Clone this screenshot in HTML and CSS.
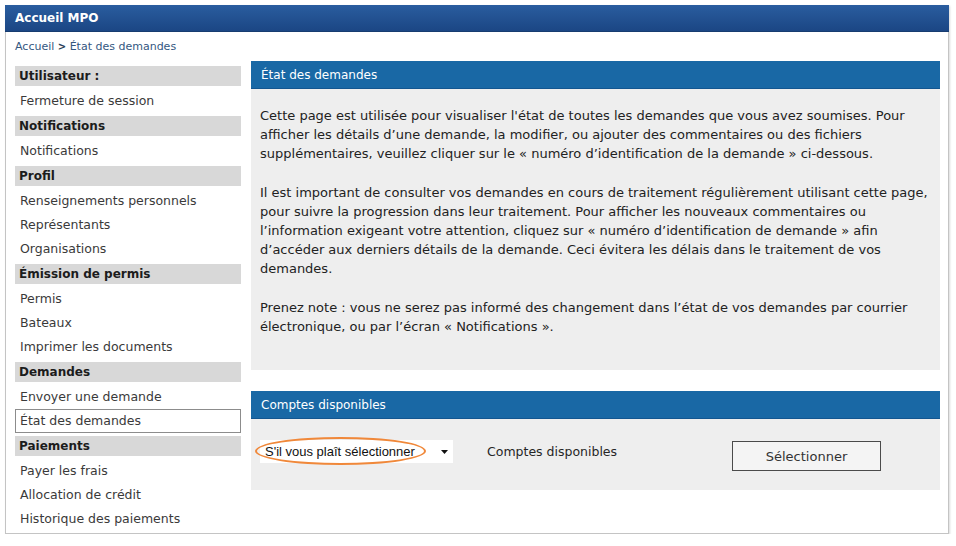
FILE: index.html
```html
<!DOCTYPE html>
<html lang="fr">
<head>
    <meta charset="UTF-8">
    <meta name="viewport" content="width=device-width, initial-scale=1.0">
    <title>État des demandes - Accueil MPO</title>
    <link rel="stylesheet" href="styles.css">
</head>
<body>
    <div class="frame">
        <!-- Top bar -->
        <header class="topbar">Accueil MPO</header>

        <!-- Breadcrumb -->
        <div class="crumbs">
            <a href="#">Accueil</a> <b class="crumb-sep">&gt;</b> <a href="#">État des demandes</a>
        </div>

        <div class="layout">
            <!-- Side menu -->
            <nav class="sidebar">
                <div class="menu-group">
                    <h3 class="menu-title">Utilisateur :</h3>
                    <ul class="menu-list">
                        <li><a href="#">Fermeture de session</a></li>
                    </ul>
                </div>
                <div class="menu-group">
                    <h3 class="menu-title">Notifications</h3>
                    <ul class="menu-list">
                        <li><a href="#">Notifications</a></li>
                    </ul>
                </div>
                <div class="menu-group">
                    <h3 class="menu-title">Profil</h3>
                    <ul class="menu-list">
                        <li><a href="#">Renseignements personnels</a></li>
                        <li><a href="#">Représentants</a></li>
                        <li><a href="#">Organisations</a></li>
                    </ul>
                </div>
                <div class="menu-group">
                    <h3 class="menu-title">Émission de permis</h3>
                    <ul class="menu-list">
                        <li><a href="#">Permis</a></li>
                        <li><a href="#">Bateaux</a></li>
                        <li><a href="#">Imprimer les documents</a></li>
                    </ul>
                </div>
                <div class="menu-group">
                    <h3 class="menu-title">Demandes</h3>
                    <ul class="menu-list">
                        <li><a href="#">Envoyer une demande</a></li>
                        <li class="active"><a href="#">État des demandes</a></li>
                    </ul>
                </div>
                <div class="menu-group">
                    <h3 class="menu-title">Paiements</h3>
                    <ul class="menu-list">
                        <li><a href="#">Payer les frais</a></li>
                        <li><a href="#">Allocation de crédit</a></li>
                        <li><a href="#">Historique des paiements</a></li>
                    </ul>
                </div>
            </nav>

            <!-- Main content -->
            <main class="content">
                <section class="panel">
                    <h2 class="panel-title">État des demandes</h2>
                    <div class="panel-body info-body">
                        <p>Cette page est utilisée pour visualiser l'état de toutes les demandes que vous avez soumises. Pour<br>
                        afficher les détails d’une demande, la modifier, ou ajouter des commentaires ou des fichiers<br>
                        supplémentaires, veuillez cliquer sur le « numéro d’identification de la demande » ci-dessous.</p>
                        <p>Il est important de consulter vos demandes en cours de traitement régulièrement utilisant cette page,<br>
                        pour suivre la progression dans leur traitement. Pour afficher les nouveaux commentaires ou<br>
                        l’information exigeant votre attention, cliquez sur « numéro d’identification de demande » afin<br>
                        d’accéder aux derniers détails de la demande. Ceci évitera les délais dans le traitement de vos<br>
                        demandes.</p>
                        <p>Prenez note : vous ne serez pas informé des changement dans l’état de vos demandes par courrier<br>
                        électronique, ou par l’écran « Notifications ».</p>
                    </div>
                </section>

                <section class="panel accounts">
                    <h2 class="panel-title">Comptes disponibles</h2>
                    <div class="panel-body accounts-body">
                        <div class="select-wrap">
                            <select class="account-select">
                                <option>S'il vous plaît sélectionner</option>
                            </select>
                            <svg class="caret" width="7" height="4" viewBox="0 0 7 4"><path d="M0 0h7L3.5 4z" fill="#111"/></svg>
                            <span class="highlight"></span>
                        </div>
                        <span class="accounts-label">Comptes disponibles</span>
                        <button type="button" class="select-btn">Sélectionner</button>
                    </div>
                </section>
            </main>
        </div>
    </div>
</body>
</html>
```

FILE: styles.css
```css
/* Base */
body {
    margin: 0;
    background-color: #fff;
    font-family: 'DejaVu Sans', Verdana, sans-serif;
    font-size: 12px;
    color: #262626;
}

a {
    color: inherit;
    text-decoration: none;
}

/* Outer frame */
.frame {
    box-sizing: border-box;
    width: 944px;
    height: 529px;
    margin: 5px 0 0 5px;
    border: 1px solid #c4c4c4;
    box-shadow: 1px 1px 2px rgba(0,0,0,0.15);
}

/* Top bar */
.topbar {
    height: 26px;
    line-height: 26px;
    margin: -1px -1px 0;
    padding-left: 10px;
    background: linear-gradient(#2a5d9f, #1b4684);
    border-bottom: 1px solid #173c70;
    color: #fff;
    font-weight: bold;
    font-size: 12px;
}

/* Breadcrumb */
.crumbs {
    height: 29px;
    line-height: 30px;
    padding-left: 9px;
    font-size: 11px;
    color: #34577f;
}

.crumb-sep {
    color: #2b3f5a;
    font-size: 10px;
}

/* Layout */
.layout {
    display: flex;
    gap: 10px;
    padding: 0 8px 0 9px;
}

/* Sidebar */
.sidebar {
    width: 226px;
    margin-top: 5px;
}

.menu-title {
    margin: 0;
    height: 20px;
    line-height: 21px;
    padding-left: 4px;
    background-color: #d8d8d8;
    color: #1c1c1c;
    font-size: 12px;
    font-weight: bold;
}

.menu-list {
    list-style: none;
    margin: 0;
    padding: 3px 0;
}

.menu-list li {
    height: 24px;
    line-height: 24px;
    padding-left: 5px;
    font-size: 12.5px;
    color: #3a3a3a;
}

.menu-list li.active {
    box-sizing: border-box;
    line-height: 22px;
    padding-left: 4px;
    border: 1px solid #8c8c8c;
}

/* Panels */
.content {
    width: 689px;
}

.panel-title {
    margin: 0;
    height: 27px;
    line-height: 29px;
    padding-left: 10px;
    background-color: #1968a5;
    border-bottom: 1px solid #135690;
    color: #fff;
    font-size: 12px;
    font-weight: normal;
}

.panel-body {
    background-color: #eeeeee;
}

.info-body {
    box-sizing: border-box;
    height: 281px;
    padding: 17px 2px 0 9px;
    font-size: 13px;
    line-height: 19px;
    white-space: nowrap;
    color: #222;
}

.info-body p {
    margin: 0 0 20px;
}

.accounts {
    margin-top: 21px;
}

.accounts-body {
    box-sizing: border-box;
    height: 71px;
    padding: 21px 0 0 9px;
    display: flex;
    align-items: flex-start;
}

/* Dropdown */
.select-wrap {
    position: relative;
    width: 193px;
    height: 23px;
}

.account-select {
    appearance: none;
    width: 100%;
    height: 23px;
    border: none;
    background-color: #fff;
    padding: 0 0 0 5px;
    font-family: 'Liberation Sans', Arial, sans-serif;
    font-size: 13px;
    color: #111;
}

.caret {
    position: absolute;
    right: 5px;
    top: 10px;
}

.highlight {
    position: absolute;
    left: -5px;
    top: -3px;
    width: 167px;
    height: 24px;
    border: 2px solid #f0883a;
    border-radius: 50%;
    pointer-events: none;
}

.accounts-label {
    width: 245px;
    margin-left: 34px;
    line-height: 23px;
    font-size: 12.5px;
    color: #262626;
}

.select-btn {
    width: 149px;
    height: 30px;
    margin-top: 1px;
    background-color: #f4f4f4;
    border: 1px solid #4a4a4a;
    font-family: 'DejaVu Sans', Verdana, sans-serif;
    font-size: 13px;
    color: #333;
    cursor: pointer;
}
```
